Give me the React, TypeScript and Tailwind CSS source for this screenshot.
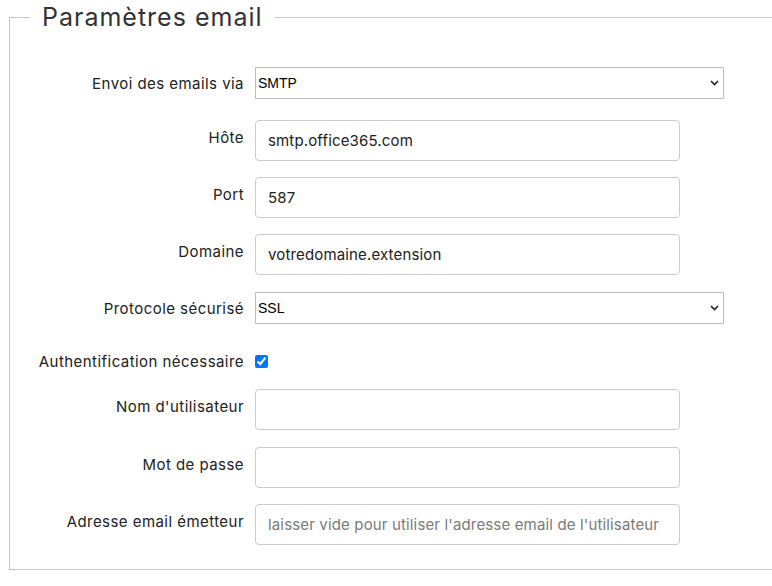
import React from "react";

const font = { fontFamily: "Inter, 'Open Sans', sans-serif" };

const labelCls = "w-[245px] shrink-0 text-right text-[15px] tracking-[0.45px] leading-[21px] text-[#212121] pr-[11px]";

function SelectRow({ label, value, top }: { label: string; value: string; top: string }) {
  return (
    <div className={`flex ${top}`}>
      <div className={`${labelCls} pt-[6px]`}>{label}</div>
      <div className="relative w-[469px] h-[32px]">
        <select
          defaultValue={value}
          className="w-full h-full appearance-none border border-[#bfbfbf] bg-white pl-[2px] text-[14px] text-black outline-none"
          style={{ fontFamily: "'Liberation Sans', Arial, sans-serif" }}
        >
          <option>{value}</option>
        </select>
        <svg className="absolute right-[5px] top-[13px]" width="9" height="6" viewBox="0 0 9 6">
          <path d="M1 1l3.5 3.5L8 1" fill="none" stroke="#222" strokeWidth="1.6" />
        </svg>
      </div>
    </div>
  );
}

function InputRow({ label, value, placeholder, top }: { label: string; value?: string; placeholder?: string; top: string }) {
  return (
    <div className={`flex ${top}`}>
      <div className={`${labelCls} pt-[7px]`}>{label}</div>
      <input
        type="text"
        defaultValue={value}
        placeholder={placeholder}
        className="w-[425px] h-[41px] rounded-[4px] border border-[#cccccc] bg-white px-[12px] text-[15px] tracking-[0.15px] text-[#212121] placeholder:text-[#7a7a7a] outline-none"
        style={font}
      />
    </div>
  );
}

export default function App() {
  return (
    <div className="w-[772px] h-[586px] overflow-hidden bg-white" style={font}>
      <fieldset className="ml-[9px] w-[800px] border border-[#c4c4c4] pb-[24px] px-0 m-0">
        <legend className="ml-[20px] px-[12px] text-[25px] tracking-[1px] leading-[34px] text-[#333333]">Paramètres email</legend>
        <SelectRow label="Envoi des emails via" value="SMTP" top="mt-[33px]" />
        <InputRow label="Hôte" value="smtp.office365.com" top="mt-[21px]" />
        <InputRow label="Port" value="587" top="mt-[16px]" />
        <InputRow label="Domaine" value="votredomaine.extension" top="mt-[16px]" />
        <SelectRow label="Protocole sécurisé" value="SSL" top="mt-[17px]" />
        <div className="flex items-center mt-[27px] h-[21px]">
          <div className={labelCls}>Authentification nécessaire</div>
          <input type="checkbox" defaultChecked className="m-0 w-[13px] h-[13px]" />
        </div>
        <InputRow label="Nom d'utilisateur" top="mt-[17px]" />
        <InputRow label="Mot de passe" top="mt-[17px]" />
        <InputRow
          label="Adresse email émetteur"
          placeholder="laisser vide pour utiliser l'adresse email de l'utilisateur"
          top="mt-[16px]"
        />
      </fieldset>
    </div>
  );
}
